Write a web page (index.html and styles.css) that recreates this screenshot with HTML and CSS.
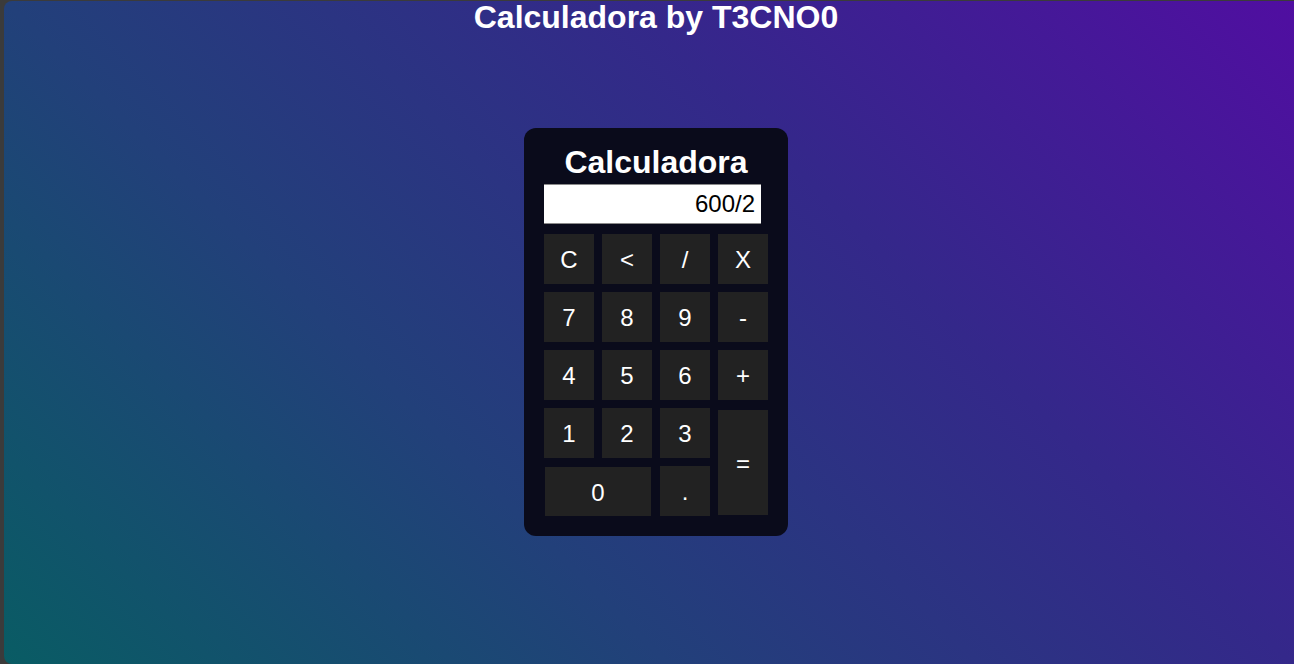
FILE: index.html
```html
<!DOCTYPE html>
<html lang="es">
<head>
<meta charset="utf-8">
<title>Calculadora by T3CNO0</title>
<link rel="stylesheet" href="styles.css">
</head>
<body>
<main class="page">
  <h1 class="title">Calculadora by T3CNO0</h1>
  <section class="calc">
    <h2 class="calc-title">Calculadora</h2>
    <input class="display" type="text" value="600/2" readonly>
    <div class="keys">
      <button class="key">C</button>
      <button class="key">&lt;</button>
      <button class="key">/</button>
      <button class="key">X</button>
      <button class="key">7</button>
      <button class="key">8</button>
      <button class="key">9</button>
      <button class="key">-</button>
      <button class="key">4</button>
      <button class="key">5</button>
      <button class="key">6</button>
      <button class="key">+</button>
      <button class="key">1</button>
      <button class="key">2</button>
      <button class="key">3</button>
      <button class="key key-eq">=</button>
      <button class="key key-zero">0</button>
      <button class="key">.</button>
    </div>
  </section>
</main>
</body>
</html>
```
FILE: styles.css
```css
html, body {
  margin: 0;
  padding: 0;
  height: 100%;
  overflow: hidden;
}
body {
  background: #3b3b3b;
  font-family: "Liberation Sans", Arial, sans-serif;
}
.page {
  box-sizing: border-box;
  margin: 1px 0 0 4px;
  height: 663px;
  padding-left: 14px;
  border-radius: 8px 0 0 8px;
  background: linear-gradient(45deg, #095c64 0%, #22407a 34%, #2b3482 50%, #34288a 66%, #500ea1 100%);
  display: flex;
  flex-direction: column;
  align-items: center;
}
.title {
  margin: 0;
  font-size: 32px;
  line-height: 32px;
  font-weight: bold;
  color: #ffffff;
}
.calc {
  margin-top: 95px;
  width: 224px;
  padding: 20px;
  background: #0a0b1b;
  border-radius: 12px;
  display: flex;
  flex-direction: column;
}
.calc-title {
  margin: 0;
  text-align: center;
  font-size: 32px;
  line-height: 28px;
  font-weight: bold;
  color: #ffffff;
}
.display {
  box-sizing: border-box;
  margin-top: 8px;
  width: 217px;
  height: 40px;
  padding: 0 6px 0 0;
  border: none;
  border-top: 1px solid #8a8a8a;
  border-bottom: 1px solid #8a8a8a;
  background: #ffffff;
  color: #000000;
  text-align: right;
  font-family: "Liberation Sans", Arial, sans-serif;
  font-size: 24px;
  outline: none;
}
.keys {
  margin-top: 10px;
  display: grid;
  grid-template-columns: repeat(4, 50px);
  grid-auto-rows: 50px;
  gap: 8px;
}
.key {
  border: none;
  padding: 2px 0 0 0;
  margin: 0;
  background: #222222;
  color: #ffffff;
  font-family: "Liberation Sans", Arial, sans-serif;
  font-size: 24px;
}
.key-eq {
  grid-row: span 2;
  margin: 2px 0 1px 0;
}
.key-zero {
  grid-column: span 2;
  margin: 1px 1px 0 1px;
}
```
